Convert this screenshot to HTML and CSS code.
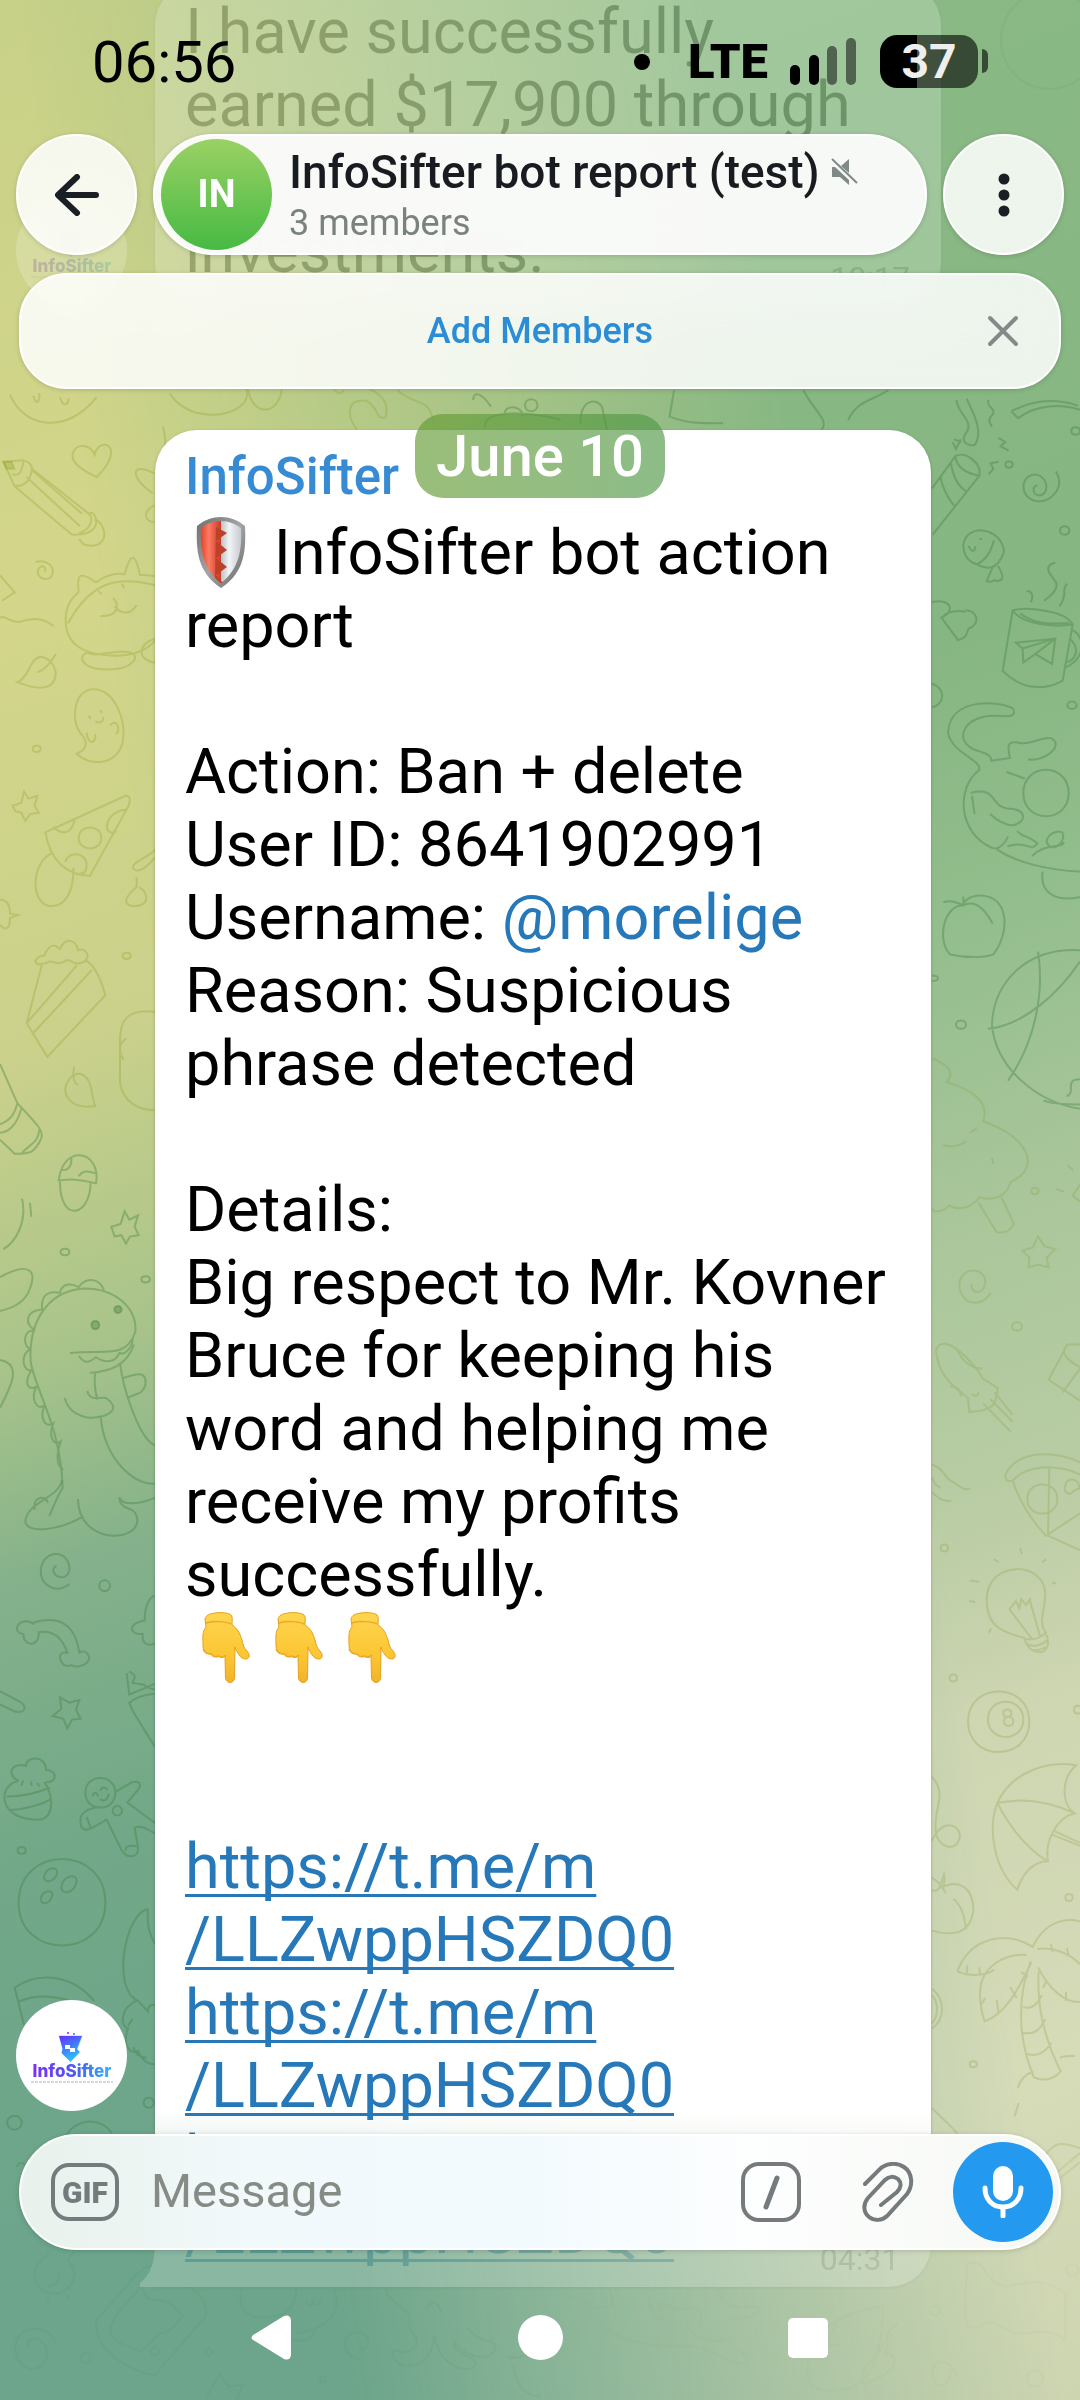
FILE: index.html
```html
<!DOCTYPE html>
<html lang="en">
<head>
    <meta charset="UTF-8">
    <meta name="viewport" content="width=device-width, initial-scale=1.0">
    <title>InfoSifter bot report (test)</title>
    <link rel="stylesheet" href="styles.css">
</head>
<body>
    <!-- shared drawings -->
    <svg class="defs" width="0" height="0" aria-hidden="true">
        <defs>
            <linearGradient id="logoText" x1="0" x2="1"><stop offset="0" stop-color="#7b2ff7"/><stop offset=".55" stop-color="#4a5cf5"/><stop offset="1" stop-color="#35b5fb"/></linearGradient>
            <linearGradient id="logoFunnel" x1="0" y1="0" x2=".4" y2="1"><stop offset="0" stop-color="#6a2cf5"/><stop offset=".5" stop-color="#3f7bff"/><stop offset="1" stop-color="#2cc4fd"/></linearGradient>
            <linearGradient id="skin" x1="0" y1="0" x2="0" y2="1"><stop offset="0" stop-color="#ffd54f"/><stop offset=".6" stop-color="#fcc634"/><stop offset="1" stop-color="#f2b32a"/></linearGradient>
            <linearGradient id="red" x1="0" x2="1"><stop offset="0" stop-color="#e0452c"/><stop offset=".4" stop-color="#fd7a63"/><stop offset="1" stop-color="#c73a24"/></linearGradient>
            <linearGradient id="silver" x1="0" x2="1"><stop offset="0" stop-color="#bcc1c5"/><stop offset=".4" stop-color="#f2f4f6"/><stop offset="1" stop-color="#c6cbcf"/></linearGradient>
            <linearGradient id="rim" x1="0" x2="1" y2="1"><stop offset="0" stop-color="#6e6e70"/><stop offset=".5" stop-color="#a4a4a6"/><stop offset="1" stop-color="#68686a"/></linearGradient>
            <symbol id="logo" viewBox="0 0 111 111">
                <circle cx="55.5" cy="55.5" r="55.5" fill="#fff"/>
                <path d="M42 35h25l-5 15H48z" fill="#9fdcff" opacity=".5"/>
                <path d="M43 36h23l-5 13 3 3-9.500 10-9-9 1-4z" fill="url(#logoFunnel)"/>
                <path d="M49 45h5v3h5v4h-5v-3h-5z" fill="#fff"/>
                <circle cx="52" cy="33" r="1" fill="#7b2ff7"/><circle cx="58" cy="34" r="1" fill="#3f7bff"/>
                <text x="56" y="77" text-anchor="middle" class="logo-text" fill="url(#logoText)">InfoSifter</text>
                <path d="M15 82h82" stroke="#d5d8e4" stroke-width="2" stroke-dasharray="3 1"/>
            </symbol>
            <symbol id="hand" viewBox="0 0 73 73">
                <path d="M20 8c1-4 4-5 10-6 6-1 14 0 16 2 2 2 1 6 1 10 5 3 8 8 10 15 1 5 2 8 5 11 3 3 3 8-1 8-5 0-7-4-10-9l-1-3-.5 31c-.5 6-8 6-9 0l-.5-22c-2 2-5 2-7 0-2 1-5 1-7-2-6 0-8-4-8-9 0-9-1-13 3-18z" fill="url(#skin)" stroke="#e5a11c" stroke-width="1"/>
                <path d="M21 12c7-2 19-2 25 1M18 38c2 5 5 5 8 5 3 4 6 3 8 2 3 2 5 1 7-1" fill="none" stroke="#eda826" stroke-width="1.500"/>
            </symbol>
        </defs>
    </svg>

    <div class="phone">
        <div class="scroll">
            <svg class="wallpaper" viewBox="0 0 1080 2400" preserveAspectRatio="xMidYMin slice" aria-hidden="true">
                <!-- left column, upper part -->
                <g class="on-yellow" transform="translate(0 400) scale(.3333 .7018)">
                    <path d="M30 -8C70 40 200 50 290-4M100-6c8 14 20 10 18-4M180-4c8 14 24 12 26 2"/>
                    <path d="M10 88l60-2c16 2 25 6 26 12l170 64c20-6 26 12 20 18-10 8-26 12-70 12L44 123zM70 88c-6 18-14 20-34 18M96 98c-4 16-22 26-52 24M80 110l160 70M96 100l150 62M266 162c16 6 8 22-30 28M284 170c24 4 34 20 26 28-10 12-60 14-72 0"/>
                    <path d="M10 88l25 0 8 10-24 0z" class="solid"/>
                    <path d="M290 110c-60-14-80-24-70-36 10-12 50-12 64 4 8-16 40-18 48-8 8 12-20 30-42 40zM106 231c30-4 56 4 52 16-6 14-50 8-44-4 4-10 30-6 20 2M0 250l44 24-38 12M0 310c20-4 26 8 60 6 40-6 70-6 100 6"/>
                    <path d="M236 274c-6-24 0-32 52-14 26-10 60-14 86-12 16-28 30-34 46 1 20 0 35 2 46 2M236 274c-50 18-54 60 0 78 50 16 180 20 230-10M204 318c70-60 150-68 262-54M295 272l10 5M365 262l8 6M340 282c20 12 14 26-38 26M344 294c20 12 48 12 66-2M262 360c-30 4-20 24 60 24 80 0 100-20 70-24-40-6-100 8-130 0zM466 340c-50 6-60 30 0 34"/>
                    <path d="M52 402c36-6 36-34 70-36 50 4 60 34 22 42-20 4-50 2-92-6zM112 388c20-2 40-14 56-26M230 504c40-8 30-20 10-30-30-20-16-62 40-62 64 0 100 44 88 76-20 34-100 34-138 16zM266 450l6 4M300 442l6 4M286 458c16 4 24 0 24-6M260 474c4 18 30 16 26 2M330 464c20-12 34 6 18 12"/>
                    <path d="M136 616l240-52c18 0 14 8 10 14L270 678c-80-2-120-24-134-62zM160 608c20 10 54 14 64-10M236 624c0-20 68-20 68 0 0 20-68 20-68 0zM376 584c-40 2-60 16-54 28 8 6 20 6 26 2M196 658c10-16 62-14 64 4 0 16-20 12-34 14M154 646c-60 14-64 70-6 75 50 2 74-22 72-54M38 578l26-4 8-16 14 10 26-4-8 14 12 10-26 2-14 10-12-12-18-2zM98 497c0-6 24-6 24 0 0 6-24 6-24 0zM0 712c30 0 30 16 30 20l24 2-24 4c0 20-20 16-30 10"/>
                    <path d="M106 800c10-12 28-4 30-12 20-18 36-8 44-6 20-20 50-10 54 2 20-4 40 6 20 16-30 8-36-2-54-2-30 12-44-4-60 4-20 2-30 4-34-2zM126 804L80 888l62 48 174-88c-14-24-34-44-60-50M80 888l150-82M100 902l176-90M368 792c0-6 24-6 24 0 0 6-24 6-24 0zM466 872c-90-6-106 16-106 40v60c8 30 60 40 106 40M378 910c-24 8-20 20-8 30M466 640c-10 10-66 16-68 26 10 10 40 2 66-14M410 680v14c-60 24-20 30 10 26 30-4 20-20-2-26M286 1006c-14-12-4-40-46-46-30 0-60 20-34 36 20 12 54 12 80 10zM222 950c-4 14 0 24 12 26"/>
                </g>
                <g class="on-green" transform="translate(0 400) scale(.3333 .7018)">
                    <path d="M0 946l52 56c60 30 80 40 72 50-20 20-30 22-80 22L0 1054M52 1002c-10 20-30 26-52 30M64 1010c-14 24-40 34-64 34M118 1040c-4 20-30 20-54 34M176 1112c8-28 40-36 60-36 40 0 60 20 52 40-60-6-70-6-112-4zM180 1114c0 60 92 50 92 0M236 1106c10-8 30-8 50-4M182 1096c20 4 34-4 32-16M334 1178l28-4 12-18 14 12 26-6-10 16 12 12-26 2-12 10-14-12-20 2zM182 1214c0-6 26-6 26 0 0 6-26 6-26 0zM66 1138c16 34-20 62-56 72M90 1144l4 20M424 1253c0-6 26-6 26 0 0 6-26 6-26 0zM0 1250c90-24 110-8 90 16-14 20-50 28-90 32M0 1368c70 6 30 40 0 68"/>
                    <path d="M92 1370c-6-50 40-100 160-104 100 0 160 30 154 62-30 40-90 24-196 30M92 1370c12 40 90 90 96 180-20 16-30 30-40 40M106 1326c-34-10-30-28 20-30-4-26 30-26 54-24 8-16 40-12 56-8 20-14 60-14 76 4M100 1326c-34 0-30 26-6 26-36 6-26 34 0 30-24 20-10 30 16 24-20 16 0 36 24 26-16 18 0 34 26 26-16 18 0 34 22 26-16 24-10 34 8 40M270 1386c60-2 110-10 132-40M236 1362c20 12 30 10 52 2 30 10 60 6 70-6 20 4 40-10 40-20M288 1384c-10 14 2 40 6 40M262 1412c8 16 40 8 56 10 60 20-20 30-54 28-40-4-60-12-70-28M302 1448c10 60 100 100 166 96M360 1372c10 40 60 110 106 118M368 1394c50-8 74-10 68 10-10 14-30 12-54 18"/>
                    <ellipse cx="286" cy="1318" rx="12" ry="6" class="solid"/><ellipse cx="354" cy="1296" rx="11" ry="5" class="solid"/>
                </g>
                <!-- left column, lower part -->
                <g class="on-green" transform="translate(0 1400) scale(.3333 .4464)">
                    <path d="M186 180c-10 40-110 50-110 94 10 24 100 20 174-14M234 222c0 100 180 100 178 46-4-36-50-14-54-50 10 20 60 16 110 0M104 246c-6-30 30-34 40-16"/>
                    <path d="M208 412c-40 24-86 4-86-30 6-50 90-48 86 0-10 26-50 14-48-2 2-6 4-8 10-8M298 416c0-16 32-16 32 0 0 16-32 16-32 0zM102 502c-40-22-74 18-32 22 0 30 50 30 46-4 40-4 70 10 86 46-40-6-20 40 12 28 20 10 70-6 48-26-6-6-16-6-24-2-14-70-70-84-142-66M464 438c-20 6-30 30-30 56-60 8-40 34-6 30-4 30 30 26 36 20M0 652l60 24c20 10 20 26-16 22L0 682M158 708l26-16-4-26 28 12 30-6-10 22 14 20-26 2-14 20-12-22zM388 608c30 14 10 14 10 26l34 4c10 6 20 10 32 10M380 612l8 48 76-24M386 676l12 20 66 80M386 680c20-16 50-20 78-22"/>
                    <path d="M56 854c-40-16-20-44 22-34 0-24 60-24 60 8 40 4 30 30 0 28M52 854c-60 10-60 90 70 86 50-10 30-70 10-84M20 888c60 0 100-10 130-20M32 918c40 0 100-14 120-24M70 852l-6 12M94 854v10M112 858l6 8M53 1009c0-10 24-10 24 0 0 10-24 10-24 0z"/>
                    <path d="M256 880c0-44 90-44 90 0 0 44-90 44-90 0zM278 888c0-12 16-8 16 0M302 876c0-12 18-8 20-2M300 894c14 8 24 0 26-12M346 878l50-22c30-4 30 10 10 24l-24 22 84 46M300 912c-70 6-60 30-56 44 10 14 30 4 76-16l46 70c20 20 50 14 48-8l-10-44c30-10 60 20 64 10M260 934l12 24M376 1010c0-14 20-12 34-10M338 920c0-14 28-14 28 0 0 14-28 14-28 0z"/>
                    <path d="M56 1126c0-130 260-130 260 0 0 128-260 128-260 0zM132 1070c4-24 40-26 40-12-6 24-40 24-40 12zM184 1092c4-26 46-34 46-14-8 30-46 30-46 14zM122 1118c4-20 36-22 36-10-8 24-36 24-36 10zM44 1316c80-40 180-24 238 30M44 1316l28 84M56 1348c60-20 110-10 150-4M444 1140c-70 10-110 180-30 206l30 24c0-14 10-18 24-14M444 1140c-4 40 6 60 22 80M414 1344c-60 20-50 60-30 64-20 40 10 60 30 50 10 20 30 30 50 30M384 1402l14-16M400 1450c10 20 20 20 40 24"/>
                </g>
                <!-- right column, upper part -->
                <g class="on-green" transform="translate(920 400) scale(.3333 .7018)">
                    <path d="M110 0c0 20 60 30 24 50-10 10 10 16 30 14 30-20-10-50-24-66M206 0c-10 10 20 10 14 20-20 8-10 14-4 18M274 16c60-14 120-20 200-8M274 16l20 10c50-18 120-22 186-12M98 60l10 10 14-14M102 56l22 4M236 54l20 6-14 6 24 6M206 106l14-8-8-8 24-2M256 92c0-6 22-6 22 0 0 6-22 6-22 0zM454 44c0-7 26-7 26 0 0 7-26 7-26 0z"/>
                    <path d="M36 126l70-46c30-8 80 10 72 28l-140 84M62 110c6 18 30 36 44 42M92 88c6 20 20 34 46 42M106 80c4 20 50 26 72 28M408 102c30 24-20 46-60 42-50-4-50-38 0-38 40 4 40 30 8 30-20-2-20-14-4-14M130 206c10-32 116-24 122 10-20 30-60 24-82 18-30-4-40-14-40-28zM222 200c-10 16-20 26-50 34M220 236l-20 22c20 4 20-4 30 0 24 0 20-8 4-22M146 208c10 12 20 6 20 0M178 198h8M420 186c0-8 28-8 28 0 0 8-28 8-28 0z"/>
                    <path d="M278 300l-30 86c60 28 130 28 180 14l30-80c-60 4-150 0-180-20 40-6 160 0 180 20M300 304c50 18 100 14 148 14M458 328c40 10 40 40-24 54M450 340c30 14 20 30-12 34M288 346l118-6-10 36-50-14-36 12-2-20zM308 354l98-14-60 22M406 232c-40 4-14 18 0 26 14 10-10 20-34 28M442 262c-20 6 4 16-24 32M320 272c20 0 20 10 12 16M36 288c60-6 70 14 28 22l50 32c40-4 20-18 40-18 30-10 10-26-20-24M66 310c20-10 50-10 70-8M36 404c50 10 30 32 0 34M442 435c0-7 28-7 28 0 0 7-28 7-28 0z"/>
                    <path d="M280 440c-30-10-190-20-196 34 10 30 110 40 92 54-70 26-60 90 40 110 20 4 40-6 48-16M280 440c10 14-20 10-60 10-80 0-120 30-66 46 20 6 60 6 60 18l56-4c-10-20-4-24 24-22 30 6 80-10 100-6 40 10-20 34-70 30M152 560c80-10 60 20 110 22 60 0 60 20 16 24-20 0-40-4-68-16M156 564l8 26M310 560c0-44 136-44 136 0 0 44-136 44-136 0zM260 530c20 4 40 6 54 10M230 640c60 20 160 30 250 32M262 636c60-10 70 10 90-4-20-10-50-10-60-18M336 650c40-20 90-10 96-20M380 630c0-14 50-20 50-10 0 16-40 24-50 10zM368 672c-10 30 40 44 112 36"/>
                    <path d="M130 720c-60 0-80 50-40 70 60 6 110 4 130 0 50-30 50-84-40-84-30 0-50 8-50 14 40-10 70 10 88 26M70 716c20-4 40 0 60 4M130 708v10M36 820c24 0 24 8 0 8M108 890c0-8 30-8 30 0 0 8-30 8-30 0zM480 784c-170-4-260 50-264 106 10 60 130 110 264 120M354 786c20 60-10 130-90 184M204 896c110-6 210-50 276-96M480 968c-50 0-10 20-40 24M370 998c40 8 80 4 110 6"/>
                </g>
                <g class="on-pale" transform="translate(920 400) scale(.3333 .7018)">
                    <path d="M36 938c50 10 70 20 44 34 70 10 130 26 110 56 130 20 180 66 82 86-10 20-50 28-94 22-20 14-60 20-90 12-20 10-50 10-50 4M70 1062c30 4 50 0 70-6M150 1044l20-6M216 1080l4 8M176 1144l54 42c30 2 40-4 52-12l-38-38M334 1127c0-6 22-6 22 0 0 6-22 6-22 0zM408 1124l24 4M442 1090l18 8M480 1118l-22 16 22 8M308 1212l30-4 16-16 20 14 32 4-26 12 6 14-32-4-28 4 2-14zM212 1272c-30 24-90 16-94-10 0-28 80-28 78-4-6 20-50 14-40 2M276 1320c0-8 30-8 30 0 0 8-30 8-30 0z"/>
                    <path d="M48 1354c20-30 120 20 140 40l46 14-10 22c-30 14-60 10-76 12l-4-20c-40-16-90-30-96-68zM112 1354c20 20 50 26 76 26M90 1406c30-2 30 10 34 14M224 1414l54 32M212 1424l66 32M190 1430l82 40M156 1416c10 6 20 2 20-2M480 1346h-38l-56 50 94 30M428 1414l52-34M442 1346c-20 10-10 20 38 32"/>
                </g>
                <!-- right column, lower part -->
                <g class="on-pale" transform="translate(920 1400) scale(.3333 .5102)">
                    <path d="M36 126c40 10 40 30 60 34 20 6 30 18 54 14M36 152c10 20 20 16 26 20M36 180c20 14 30 18 58 18M256 146c40-50 150-46 224-24M256 146c0 14 10 14 22 12 40-30 130-34 202-12M278 158c20 40 60 80 100 108l102-44M388 132l-4 134 96 28M322 194c0-38 90-38 90 0 0 38-90 38-90 0zM440 160c20-10 40 0 38 14-20 0-20 10-30 10-20-4-14-14-8-24zM62 290c0-9 22-9 22 0 0 9-22 9-22 0z"/>
                    <path d="M200 392c0-80 176-78 176-10-4 40-20 50 0 74 20 24 0 40-20 38-30 0-40-20-44-28-60-10-112-20-112-74zM268 410l70 60M328 390l32 72M268 410l20-16 10 14 6-18 14 12 14-14M314 468c30 4 50-2 66-14M320 478c20 8 50 2 64-8M334 490c20 0 30 0 44-6M300 290l6 12M366 318l12-6M396 360l12-2M222 312l14 6M150 354l28 2M148 394l18 2M206 456l8-8M89 545c0-9 22-9 22 0 0 9-22 9-22 0z"/>
                    <path d="M144 630c0-78 184-78 184 0 0 80-184 80-184 0zM204 626c0-46 106-46 106 0 0 46-106 46-106 0zM250 614c0-10 24-10 24 0 0 10-24 10-24 0zM252 630c0-12 28-12 28 0 0 12-28 12-28 0zM462 607c0-10 24-10 24 0 0 10-24 10-24 0z"/>
                    <path d="M232 790c40-60 150-84 236-74-50 30-40 80-4 94-60 10-90 60-80 94-50 0-80 30-92 56-70-40-90-120-60-170 70-10 150-4 232 20M232 790c40 50 90 90 150 114M400 844l80 24M396 852l84 22M36 738c50 40 0 60 12 112 30-30 80-14 70 10-10 26-60 18-70-10-6 6-10 10-12 14M36 936c20 10 30 16 40 30M36 960c10 4 20 2 26-8M62 956c60-20 100 4 98 46-10 44-60 50-124 38M100 978c20 10 34 30 38 60M58 956l14-26c4 10 0 20-6 28M36 1154c40 20 40 60 0 78M36 1166c20 16 20 40 0 56"/>
                    <path d="M112 1120c40-70 150-80 226-48 40-56 110-56 142-50M112 1120c50 14 100 4 110-4M320 1088c-60-4-140 20-140 76 0 20 6 40 14 54 60-14 100-60 140-116M352 1076c50-4 100 10 128 30M354 1112c30 40 80 70 126 68M332 1100c-40 70-40 150 10 228 30 8 60 4 80-12-60-80-70-140-66-196M304 1122l20 8M310 1190c20 4 40 0 56-24M306 1240c30 4 50 0 70-26M316 1280c30 10 60 0 78-20M420 1290c10-6 30-4 44-4M340 1316c-20 4-40 16-46 32M296 1378l-12 26M142 1108l-2 20M178 1112l2 14M230 1176l6 26M270 1150l20 22M182 1186l14-14M392 1066l6 16M440 1074l6 14M380 1136l-10 16M438 1160v18"/>
                    <path d="M149 1302c0-8 22-8 22 0 0 8-22 8-22 0zM436 975c0-9 22-9 22 0 0 9-22 9-22 0zM36 1388c30 20 50 30 76 50M360 1500c40-60 80-40 120-34M400 1520l80-44M410 1530l70-36"/>
                </g>
                <!-- strip between the banner and the bubble -->
                <g class="on-yellow" transform="translate(0 380) scale(.4464 .3333)">
                    <path d="M380 40c40 80 130 80 165 30 20-30 0-60 0-60M556 30c10 80 70 80 76-10M746 20c10 30 20 20 24 10M800 148c-20-30-30-90 20-86 30 20 20 60 44 50 10-60-20-70-40-90M890 30c40 50 70 20 80 90M366 140c0 20 6 30 4 60M346 280c-60-40-50 20-4 60M346 376c-30 20-20 50 0 50"/>
                </g>
                <g class="on-green" transform="translate(0 380) scale(.4464 .3333)">
                    <path d="M1086 140c0-60 120-40 170-20M1060 60c0-30 20-20 40 20M1130 100c4-30 44-20 40 10M1176 76c0-24 28-24 28 0 0 24-28 24-28 0zM1300 130c0-90 50-70 50-40l10 60M1510 30l-10 80c40 20 60 20 120 20M1800 30c20 60 60 90 40 120M1900 120c20-60 60-60 90-90"/>
                </g>
                <!-- under the bottom bars -->
                <g class="on-green" transform="translate(0 1960) scale(.3443 .3333)">
                    <circle cx="42" cy="488" r="21"/><circle cx="432" cy="428" r="15"/><circle cx="248" cy="1194" r="14"/><circle cx="606" cy="1176" r="10"/><circle cx="938" cy="1258" r="9"/><circle cx="450" cy="1174" r="12"/>
                    <path d="M185 540c30-70 110-70 140-20M48 620c10-16 20-12 26-4M140 870c-10 40-40 30-40 80 10 70 110 70 116-10 0-30-26-30-14-50 16-10 10-20 14-30M172 940c0 30-16 40-36 40M138 1010l6 24M194 1004l6 16M280 1080l120-140c60-60 120 10 150 40 70 50 50 100 30 110l-130 155c-40 0-180-60-170-165zM320 1110c10-50 50-80 90-130 20 30 10 40 40 40 40 0 60 20 80 50-20 20-30 50-70 50-20 30-40 50-56 54-30-20-80-20-84-64M160 1150c-10-60-110-60-116 10 0 80 90 90 92 20 0-50-60-60-56-20M700 990c-10 60 20 90 80 80 60 0 80-40 80-90M860 1120c80-10 140-60 110-130M850 1140c50 10 60-10 64-30M890 1020c0 20 20 20 20 0 0 20 20 20 20 0M1044 1200c-60-20-50-80-10-84 40 0 50 50 10 56M1120 985c0 40 80 60 70 100-10 30 30 40 20 70-40 50-80-10-70 30 10 50 120 50 120-60 20 100 100 120 120 90 10-30-60-20-60-70 40 60 120 60 120 10-20-20-40 0-80-50M1240 1050c10-40 40-20 40 10M1470 1190c50 10 60-10 90-20M1490 1220c10 60 40 90 80 90M600 1310l36-66 30 36 40-6-20 46"/>
                </g>
                <g class="on-pale" transform="translate(540 1960) scale(.3443 .3333)">
                    <circle cx="1148" cy="1052" r="14"/><circle cx="1438" cy="1256" r="24"/><circle cx="1546" cy="930" r="18"/>
                    <path d="M40 985c60 50 90 10 110 60 40-20 80 30 50-60M166 1060c20 80 140 100 250 100 80-10 120 60 190 50-20-50-50-40-60-70-80 10-110-10-120-60M300 985c20 50 30 90 60 100-10-40-20-50 0-60 50 50 70 0 110 30l-10 50M516 985c20 90 90 40 120 60-10 40-80 30-90 30M776 1240c0-120 100-190 220-200 0 100-20 250-130 250-50 10-90-10-90-50zM870 1070l-40 90 50-10M840 1200l-60-10M1040 1090c-60 40-10 50-40 90 60 10 20 60-30 80-30 20-50 10-30-20 10-40 50-60 60-90M1210 1250c-20-60-70-60-70-10 0 50 50 50 50 0M1240 910c60-20 40 60 120 70 60-20 120-20 166 20v140c-60-40-80-20-120-20-50 10-90-60-130-20-60 20-40-60-36-190z"/>
                </g>
                <circle class="on-green" cx="1050" cy="40" r="49"/>
            </svg>

            <div class="messages">
                <article class="message message-wide">
                    <svg class="avatar"><use href="#logo"/></svg>
                    <div class="bubble">
                        <p class="text">I have successfully<br>earned $17,900 through<br><br>investments.</p>
                        <time>10:17</time>
                    </div>
                </article>
                <article class="message message-last">
                    <svg class="avatar"><use href="#logo"/></svg>
                    <div class="bubble">
                        <div class="name">InfoSifter</div>
                        <p class="text"><svg class="emoji" viewBox="0 0 73 73" role="img" aria-label="Shield"><path d="M36 1c8 0 17 3 24 9 1 24 0 46-24 62C12 56 11 34 12 10 19 4 28 1 36 1z" fill="url(#rim)"/><path d="M36 5c-8 0-14 3-20 7-1 20 1 40 20 55z" fill="url(#red)"/><path d="M36 5c8 0 14 3 20 7 1 20-1 40-20 55z" fill="url(#silver)"/><path d="M31 11l11 6-11 8 11 9-11 8 11 9-11 8 7 8-2 0c-5-3-7-7-6-7z" fill="#bd4128"/></svg> InfoSifter bot action report<br>
                        <br>
                        Action: Ban + delete<br>
                        User ID: 8641902991<br>
                        Username: <a class="mention" href="#">@morelige</a><br>
                        Reason: Suspicious phrase detected<br>
                        <br>
                        Details:<br>
                        Big respect to Mr. Kovner Bruce for keeping his word and helping me receive my profits successfully.<br>
                        <svg class="emoji"><use href="#hand"/></svg><svg class="emoji"><use href="#hand"/></svg><svg class="emoji"><use href="#hand"/></svg><br>
                        <br>
                        <br>
                        <a href="#">https://t.me/m<br>/LLZwppHSZDQ0</a><br>
                        <a href="#">https://t.me/m<br>/LLZwppHSZDQ0</a><br>
                        <a href="#">https://t.me/m<br>/LLZwppHSZDQ0</a></p>
                        <time>04:31</time>
                        <svg class="tail" viewBox="0 0 15 46"><path d="M15 0c0 20-4 34-15 42v4h15z" fill="#fff"/></svg>
                    </div>
                </article>
            </div>
        </div>

        <header class="top">
            <div class="status-bar">
                <span class="clock">06:56</span>
                <span class="dot"></span>
                <span class="network">LTE</span>
                <svg class="signal" viewBox="0 0 66 48"><rect x="0" y="27" width="10" height="20" rx="5"/><rect x="19" y="17" width="10" height="30" rx="5"/><rect x="37" y="8" width="10" height="39" rx="5" opacity=".5"/><rect x="56" y="0" width="10" height="47" rx="5" opacity=".5"/></svg>
                <span class="battery">37</span>
            </div>

            <nav class="nav-row">
                <button class="round glass" aria-label="Back">
                    <svg width="44" height="42" viewBox="0 0 44 42" fill="none" stroke="#1a1f25" stroke-width="6" stroke-linecap="round" stroke-linejoin="round"><path d="M22 3L3 21l19 18M4 21h37"/></svg>
                </button>
                <div class="title-pill glass">
                    <div class="group-avatar">IN</div>
                    <div>
                        <h1>InfoSifter bot report (test)
                            <svg width="28" height="28" viewBox="0 0 28 28"><path d="M18 1v14l-8-7zM1 9h3l14 13v5l-9-8H1z" fill="#7f8a87"/><path d="M1 1l25 24" stroke="#7f8a87" stroke-width="2"/></svg>
                        </h1>
                        <div class="members">3 members</div>
                    </div>
                </div>
                <button class="round glass" aria-label="More">
                    <svg width="12" height="44" viewBox="0 0 12 44" fill="#1a1f25"><circle cx="6" cy="6" r="5.500"/><circle cx="6" cy="22" r="5.500"/><circle cx="6" cy="38" r="5.500"/></svg>
                </button>
            </nav>

            <div class="banner glass">
                <button class="add">Add Members</button>
                <button class="close" aria-label="Close">
                    <svg width="32" height="32" viewBox="0 0 32 32" stroke="#858a88" stroke-width="4" stroke-linecap="round"><path d="M3 3l26 26M29 3L3 29"/></svg>
                </button>
            </div>

            <div class="date">June 10</div>
        </header>

        <footer class="bottom">
            <form class="composer glass">
                <button type="button" aria-label="GIF" class="gif">GIF</button>
                <input type="text" placeholder="Message" aria-label="Message">
                <button type="button" aria-label="Commands">
                    <svg width="60" height="60" viewBox="0 0 60 60" fill="none" stroke="#757b7d" stroke-width="4"><rect x="2" y="2" width="56" height="56" rx="16"/><path d="M36 16L25 45" stroke-width="5" stroke-linecap="round"/></svg>
                </button>
                <button type="button" aria-label="Attach" class="attach">
                    <svg width="52" height="60" viewBox="0 0 52 60" fill="none" stroke="#757b7d" stroke-width="4" stroke-linecap="round"><path d="M3 22L17 8C23 1 35 0 42 5c9 6 9 19 3 27L25 54c-5 5-13 5-18 1-6-5-6-13-1-19L23 18c4-4 9-4 13-1 4 4 3 9-1 13L19 43"/></svg>
                </button>
                <button type="button" aria-label="Record voice" class="mic">
                    <svg width="42" height="52" viewBox="0 0 42 52"><rect x="11" y="0" width="20" height="35" rx="10" fill="#fff"/><path d="M3 22c0 11 7 19 18 19s18-8 18-19M21 41v9" fill="none" stroke="#fff" stroke-width="5" stroke-linecap="round"/></svg>
                </button>
            </form>
            <div class="system-nav">
                <button aria-label="System back"><svg width="45" height="45" viewBox="0 0 45 45" fill="#fff"><path d="M3 20L34 1q6-2 7 4v35q-1 6-7 4L3 25q-3-2 0-5z"/></svg></button>
                <button aria-label="Home"><svg width="45" height="45" viewBox="0 0 45 45" fill="#fff"><circle cx="22.500" cy="22.500" r="22.500"/></svg></button>
                <button aria-label="Recents"><svg width="45" height="45" viewBox="0 0 45 45" fill="#fff"><rect x="2" y="3" width="40" height="40" rx="5"/></svg></button>
            </div>
        </footer>
    </div>
</body>
</html>
```
FILE: styles.css
```css
* {
    box-sizing: border-box;
}
body {
    margin: 0;
    font-family: Roboto, "Liberation Sans", sans-serif;
    color: #000;
}
button {
    display: flex;
    align-items: center;
    justify-content: center;
    padding: 0;
    border: none;
    background: none;
    font-family: inherit;
    cursor: pointer;
}
.defs {
    position: absolute;
}

/* Background */
.phone {
    position: relative;
    height: 100vh;
    overflow: hidden;
    background: linear-gradient(160deg, #c8d188 0%, #d3d68a 21%, #cbd18b 38%, #a9c48a 49%, #84b18b 57%, #72a888 67%, #6ca58b 80%);
}
.phone::before {
    content: "";
    position: absolute;
    inset: 0;
    background: linear-gradient(160deg, #8bba86 0%, #86b682 35%, #92bd8c 45%, #a9c69a 56%, #b8cca3 66%, #cdd5b1 74%, #d6dbb8 88%, #cdd4b0 100%);
    mask-image: linear-gradient(82deg, transparent 25%, #000 75%);
}
.scroll {
    position: absolute;
    inset: 0;
    mask-image: linear-gradient(to bottom, rgba(0,0,0,0.2) 280px, #000 400px, #000 calc(100% - 290px), rgba(0,0,0,0.9) calc(100% - 266px), rgba(0,0,0,0.2) calc(100% - 190px));
}
.wallpaper {
    position: absolute;
    width: 100%;
    height: 100%;
    fill: none;
    stroke-width: 2px;
}
.wallpaper * {
    vector-effect: non-scaling-stroke;
}
.on-yellow {
    stroke: rgba(140,160,40,0.3);
}
.on-green {
    stroke: rgba(60,125,60,0.36);
}
.on-pale {
    stroke: rgba(140,155,70,0.28);
}
.on-yellow .solid {
    fill: rgba(140,160,40,0.3);
}
.on-green .solid {
    fill: rgba(60,125,60,0.36);
}

/* Messages */
.messages {
    position: relative;
    height: 100%;
    display: flex;
    flex-direction: column;
    justify-content: flex-end;
    gap: 124px;
    padding: 0 16px 113px;
}
.message {
    display: flex;
    align-items: flex-end;
    gap: 28px;
    flex-shrink: 0;
}
.avatar {
    width: 111px;
    height: 111px;
    flex-shrink: 0;
}
.message-last .avatar {
    margin-bottom: 176px;
}
.logo-text {
    font-family: Inter, "Open Sans", sans-serif;
    font-size: 17px;
    font-weight: 800;
}
.bubble {
    position: relative;
    width: 74%;
    padding: 12px 30px 19px;
    background: #fff;
    border-radius: 42px;
    box-shadow: 0 1px 3px rgba(0,0,0,0.25);
}
.message-wide .bubble {
    width: 75%;
}
.message-last .bubble {
    border-bottom-left-radius: 0;
}
.name {
    padding-bottom: 4px;
    color: #368bd3;
    font-size: 51px;
    font-weight: 500;
    line-height: 70px;
}
.text {
    margin: 0;
    font-size: 63px;
    line-height: 73px;
}
.text a {
    color: #2678b8;
    text-decoration-thickness: 3px;
    text-underline-offset: 6px;
    text-decoration-skip-ink: none;
}
.text .mention {
    text-decoration: none;
}
.emoji {
    width: 73px;
    height: 73px;
    vertical-align: bottom;
}
time {
    position: absolute;
    right: 31px;
    bottom: 10px;
    color: #8e9490;
    font-size: 32px;
    line-height: 36px;
}
.tail {
    position: absolute;
    left: -15px;
    bottom: 0;
    width: 15px;
    height: 46px;
}

/* Top bars */
.top {
    position: absolute;
    top: 0;
    left: 0;
    right: 0;
}
.glass {
    background: rgba(255,255,255,0.85);
    border: 2px solid #fff;
    box-shadow: 0 1px 5px rgba(0,0,0,0.16);
    backdrop-filter: blur(24px);
}
.status-bar {
    display: flex;
    align-items: center;
    height: 134px;
    padding: 0 102px 11px 92px;
}
.clock {
    margin-right: auto;
    font-size: 58px;
}
.dot {
    width: 16px;
    height: 16px;
    margin-right: 38px;
    border-radius: 50%;
    background: #000;
}
.network {
    margin-right: 22px;
    font-family: Roboto, sans-serif;
    font-size: 49px;
    font-weight: 900;
}
.signal {
    width: 66px;
    height: 48px;
    margin-right: 24px;
}
.battery {
    position: relative;
    width: 98px;
    height: 53px;
    border-radius: 17px;
    background: linear-gradient(to right, #000 38%, rgba(0,0,0,0.6) 38%);
    color: #eee;
    font-size: 48px;
    font-weight: 700;
    line-height: 53px;
    text-align: center;
}
.battery::after {
    content: "";
    position: absolute;
    left: 102px;
    top: 14px;
    width: 6px;
    height: 24px;
    border-radius: 0 6px 6px 0;
    background: rgba(0,0,0,0.6);
}
.nav-row {
    display: flex;
    gap: 16px;
    padding: 0 16px;
}
.round {
    width: 121px;
    height: 121px;
    flex-shrink: 0;
    border-radius: 50%;
}
.title-pill {
    flex: 1;
    display: flex;
    align-items: center;
    gap: 17px;
    height: 121px;
    padding-left: 6px;
    border-radius: 61px;
    background: rgba(252,252,252,0.95);
}
.group-avatar {
    width: 111px;
    height: 111px;
    border-radius: 50%;
    background: linear-gradient(#9ad164, #46ba43);
    color: #fff;
    font-size: 38px;
    font-weight: 700;
    line-height: 111px;
    text-align: center;
}
h1 {
    margin: 0;
    color: #181c20;
    font-size: 46px;
    font-weight: 500;
    line-height: 56px;
    white-space: nowrap;
}
h1 svg {
    vertical-align: 2px;
}
.members {
    color: #7a827e;
    font-size: 36px;
    line-height: 46px;
}
.banner {
    display: flex;
    align-items: center;
    height: 116px;
    margin: 18px 19px 0;
    padding: 0 40px;
    border-radius: 48px;
}
.add {
    flex: 1;
    padding-left: 32px;
    color: #2a8dd6;
    font-size: 36px;
    font-weight: 500;
}
.date {
    width: fit-content;
    margin: 25px auto 0;
    padding: 0 21px;
    border-radius: 28px;
    background: linear-gradient(to right, rgba(100,155,50,0.65), rgba(80,152,72,0.65));
    color: #fff;
    font-size: 58px;
    font-weight: 500;
    line-height: 84px;
}

/* Bottom bars */
.bottom {
    position: absolute;
    left: 0;
    right: 0;
    bottom: 0;
}
.composer {
    display: flex;
    align-items: center;
    height: 116px;
    margin: 0 19px;
    padding: 0 6px 0 30px;
    border-radius: 58px;
    background: linear-gradient(to right, #e9f1ec, #f1f9fb 22%, #f3fafe 50%, #fdfefe 70%, #f6f8f4);
}
.gif {
    width: 68px;
    height: 58px;
    border: 4px solid #757b7d;
    border-radius: 18px;
    color: #757b7d;
    font-size: 30px;
    font-weight: 900;
}
input {
    flex: 1;
    min-width: 0;
    padding: 0 32px 4px;
    border: none;
    outline: none;
    background: none;
    font-family: inherit;
    font-size: 47px;
}
input::placeholder {
    color: #868b85;
    opacity: 1;
}
.attach {
    margin: 0 39px 0 61px;
}
.mic {
    width: 100px;
    height: 100px;
    border-radius: 50%;
    background: #2499f0;
}
.system-nav {
    display: flex;
    justify-content: center;
    gap: 223px;
    height: 150px;
    padding-top: 25px;
}
```
